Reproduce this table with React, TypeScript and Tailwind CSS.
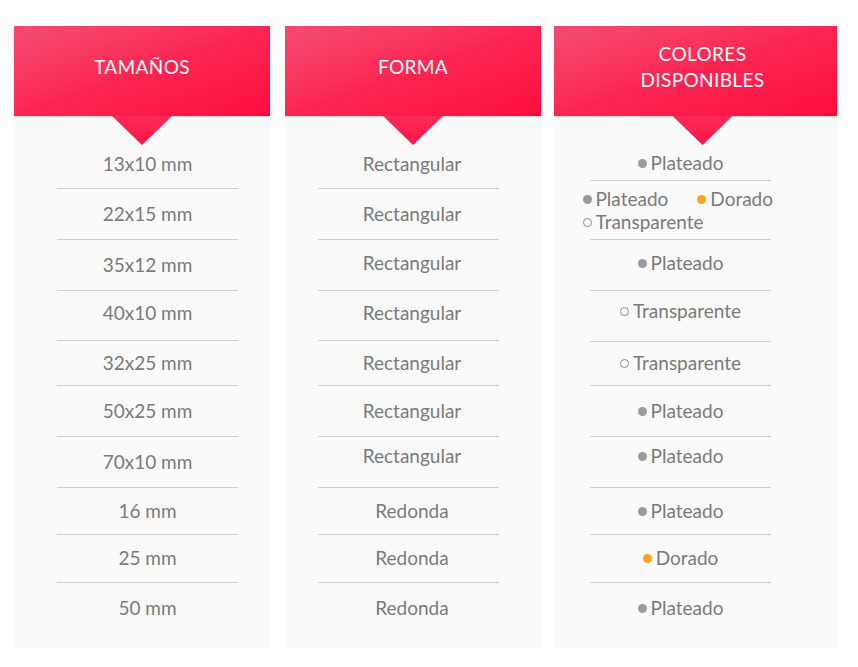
import React from "react";

type Dot = "gray" | "gold" | "clear";

type Row = {
  h: string;
  shift?: string;
  label?: string;
  dot?: Dot;
  multi?: boolean;
  last?: boolean;
};

const dotClass: Record<Dot, string> = {
  gray: "bg-[#9b9b9b]",
  gold: "bg-[#fba41c]",
  clear: "border border-[#8a8a8a] bg-white",
};

function Swatch({ kind }: { kind: Dot }) {
  return <span className={`inline-block w-[9px] h-[9px] rounded-full mr-[4px] translate-y-[-2px] ${dotClass[kind]}`} />;
}

const sizes: Row[] = [
  { h: "h-[49px]", label: "13x10 mm" },
  { h: "h-[51px]", label: "22x15 mm" },
  { h: "h-[51px]", label: "35x12 mm" },
  { h: "h-[50px]", label: "40x10 mm", shift: "pb-[5px]" },
  { h: "h-[45px]", label: "32x25 mm" },
  { h: "h-[51px]", label: "50x25 mm" },
  { h: "h-[51px]", label: "70x10 mm" },
  { h: "h-[47px]", label: "16 mm" },
  { h: "h-[48px]", label: "25 mm" },
  { h: "h-[50px]", label: "50 mm", last: true },
];

const shapes: Row[] = [
  { h: "h-[49px]", label: "Rectangular" },
  { h: "h-[51px]", label: "Rectangular" },
  { h: "h-[51px]", label: "Rectangular", shift: "pb-[3px]" },
  { h: "h-[50px]", label: "Rectangular", shift: "pb-[5px]" },
  { h: "h-[45px]", label: "Rectangular" },
  { h: "h-[51px]", label: "Rectangular" },
  { h: "h-[51px]", label: "Rectangular", shift: "pb-[12px]" },
  { h: "h-[47px]", label: "Redonda" },
  { h: "h-[48px]", label: "Redonda" },
  { h: "h-[50px]", label: "Redonda", last: true },
];

const colors: Row[] = [
  { h: "h-[41px]", label: "Plateado", dot: "gray", shift: "pt-[6px]" },
  { h: "h-[59px]", multi: true },
  { h: "h-[51px]", label: "Plateado", dot: "gray", shift: "pb-[4px]" },
  { h: "h-[51px]", label: "Transparente", dot: "clear", shift: "pb-[10px]" },
  { h: "h-[44px]", label: "Transparente", dot: "clear" },
  { h: "h-[51px]", label: "Plateado", dot: "gray" },
  { h: "h-[51px]", label: "Plateado", dot: "gray", shift: "pb-[12px]" },
  { h: "h-[47px]", label: "Plateado", dot: "gray" },
  { h: "h-[48px]", label: "Dorado", dot: "gold" },
  { h: "h-[50px]", label: "Plateado", dot: "gray", last: true },
];

function Column({
  title,
  rows,
  width,
  listOffset,
  headerPad,
  textPad = "",
}: {
  title: React.ReactNode;
  rows: Row[];
  width: string;
  listOffset: string;
  headerPad: string;
  textPad?: string;
}) {
  return (
    <div className={`flex flex-col ${width} h-[622px] bg-[#fafafa]`}>
      <div className="relative">
        <div
          className={`h-[90px] pb-[8px] flex items-center justify-center text-center text-white text-[19px] leading-[26px] tracking-[0.02em] uppercase bg-gradient-to-br from-[#f64a70] via-[#fb2552] to-[#ff0a3e] shadow-[0_1px_1px_rgba(0,0,0,0.12)] ${headerPad}`}
        >
          {title}
        </div>
        <div className={`absolute top-[90px] left-0 right-0 flex justify-center ${headerPad}`}>
          <div className="w-[60px] h-[29px] bg-gradient-to-b from-[#fb2a56] to-[#ff1448] [clip-path:polygon(0_0,100%_0,50%_100%)]" />
        </div>
      </div>
      <div className={`w-[181px] pt-[24px] ${listOffset}`}>
        {rows.map((r, i) => (
          <div
            key={i}
            className={`${r.h} ${r.shift ?? ""} ${textPad} flex items-center justify-center whitespace-nowrap ${r.last ? "" : "border-b border-[#cfcfcf]"}`}
          >
            {r.multi ? (
              <div className="w-[190px] ml-[-6px] text-left leading-[23px]">
                <div className="flex">
                  <span>
                    <Swatch kind="gray" />
                    Plateado
                  </span>
                  <span className="ml-[29px]">
                    <Swatch kind="gold" />
                    Dorado
                  </span>
                </div>
                <div>
                  <Swatch kind="clear" />
                  Transparente
                </div>
              </div>
            ) : (
              <span>
                {r.dot && <Swatch kind={r.dot} />}
                {r.label}
              </span>
            )}
          </div>
        ))}
      </div>
    </div>
  );
}

export default function App() {
  return (
    <div
      className="w-[858px] h-[667px] bg-white pt-[26px] pl-[14px] flex gap-[15px] text-[19px] text-[#7a7a7a]"
      style={{ fontFamily: "Lato, 'Open Sans', sans-serif" }}
    >
      <Column title="Tamaños" rows={sizes} width="w-[256px]" listOffset="ml-[43px]" headerPad="" />
      <Column title="Forma" rows={shapes} width="w-[256px]" listOffset="ml-[33px]" headerPad="" textPad="pl-[7px]" />
      <div className="ml-[-2px]">
        <Column
          title={
            <span>
              Colores
              <br />
              disponibles
            </span>
          }
          rows={colors}
          width="w-[283px]"
          listOffset="ml-[36px]"
          headerPad="pl-[14px]"
        />
      </div>
    </div>
  );
}
